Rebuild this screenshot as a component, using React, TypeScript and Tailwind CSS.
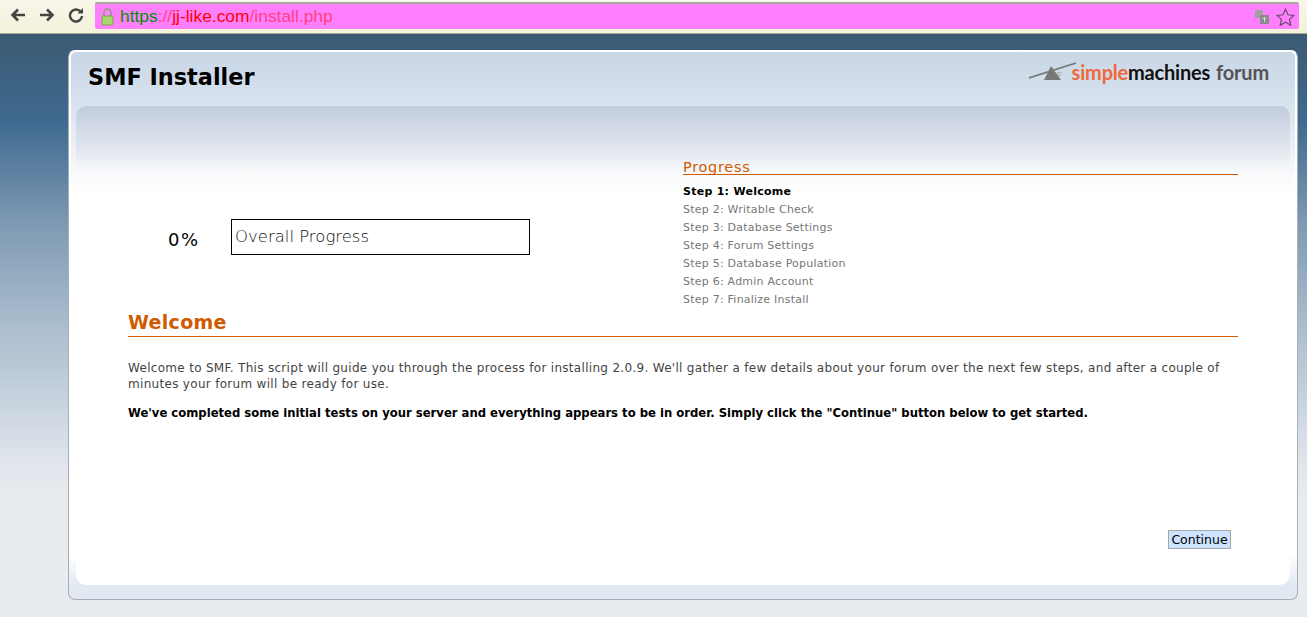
import React from "react";

const steps = ["Step 2: Writable Check","Step 3: Database Settings","Step 4: Forum Settings","Step 5: Database Population","Step 6: Admin Account","Step 7: Finalize Install"];

function Back({flip=false}:{flip?:boolean}){
  return <svg width="16" height="14" viewBox="0 0 16 14" className={flip?"-scale-x-100":""}><path d="M15 7H3M8 1.500 2.500 7 8 12.500" fill="none" stroke="#444" strokeWidth="2.600"/></svg>;
}

export default function App(){
  return (
    <div className="w-[1307px] h-[617px] overflow-hidden flex flex-col bg-[linear-gradient(180deg,#3c5a72_0px,#3c5a72_34px,#3f6a90_122px,#7c98b2_220px,#a4b8ca_310px,#e0e5ec_463px,#e8ecf0_500px)] font-['DejaVu_Sans',sans-serif]">
      <div className="h-[34px] shrink-0 flex items-start bg-[linear-gradient(180deg,#f8f7ea,#f3f1d8)] border-b border-[#a8a89c]">
        <div className="flex items-center gap-[13px] pl-[10px] w-[95px] h-[30px]">
          <Back/><Back flip/>
          <svg width="16" height="16" viewBox="0 0 16 16"><path d="M13 5.200A6 6 0 1 0 14 9" fill="none" stroke="#444" strokeWidth="2.400"/><path d="M9.500 6.500H15V1z" fill="#444"/></svg>
        </div>
        <div className="mt-[2px] w-[1204px] h-[27px] bg-[#ff80ff] border-t-2 border-[#a8a8a0] rounded-[2px] flex items-center pl-[6px] pr-[4px]">
          <svg width="13" height="18" viewBox="0 0 13 18" className="mr-[6px]"><path d="M3 8V4.500a3.500 3.500 0 0 1 7 0V8" fill="none" stroke="#8a9a7a" strokeWidth="1.600"/><rect x="1" y="8" width="11" height="9" rx="1" fill="#a6d86e" stroke="#7aa04e"/></svg>
          <span className="font-['Liberation_Sans',sans-serif] text-[17.400px] leading-none">
            <span className="text-[#009000]">https</span><span className="text-[#ff4080]">://</span><span className="text-[#ff0000]">jj-like.com</span><span className="text-[#ff4080]">/install.php</span>
          </span>
          <div className="ml-auto flex items-center gap-[7px]">
            <svg width="14" height="14" viewBox="0 0 14 14"><rect x="0" y="0" width="8" height="8" fill="#a0a0a0"/><rect x="5" y="5" width="9" height="9" fill="#8c8c8c"/><path d="M8 8.500h3M9.500 7v5" stroke="#ddd" strokeWidth="1"/></svg>
            <svg width="19" height="18" viewBox="0 0 19 18"><path d="M9.500 1.200 12 6.800l6 .6-4.500 4 1.300 5.900-5.300-3.100-5.300 3.100 1.300-5.900L1 7.400l6-.6z" fill="none" stroke="#6a4a6a" strokeWidth="1.200"/></svg>
          </div>
        </div>
      </div>

      <div className="mt-[16px] ml-[68px] w-[1230px] h-[550px] rounded-[7px] border border-[#a9aeb3] border-t-white border-t-2 bg-[linear-gradient(180deg,#ffffff_500px,#e2e9f2_535px)] px-[2px] flex flex-col">
        <div className="flex-1 rounded-t-[5px] rounded-b-[6px] bg-[linear-gradient(180deg,#c9d6e6_0px,#d9e3ef_54px,#ffffff_138px,#ffffff_503px,#e2e9f2_533px)] px-[5px] pb-[14px] flex flex-col">
          <div className="h-[54px] shrink-0 flex items-start justify-between pl-[12px] pr-[21px]">
            <h1 className="mt-[12px] text-[22.400px] leading-[26px] font-bold text-black">SMF Installer</h1>
            <div className="mt-[9px] flex items-start">
              <svg width="48" height="19" viewBox="0 0 48 19" className="mt-[1px] mr-[-5px]">
                <path d="M0 16 47 1" stroke="#777" strokeWidth="1.800"/>
                <path d="M22 4 32 18H15z" fill="#777"/>
                <circle cx="30" cy="12" r="1.800" fill="none" stroke="#888" strokeWidth="0.600"/>
              </svg>
              <span className="mt-[1px] block font-['Lato',sans-serif] font-bold text-[20px] leading-[20px] tracking-[-0.2px]">
                <span className="text-[#ee6a3c]">simple</span><span className="text-[#111]">machines</span><span className="text-[#555] ml-[6px]">forum</span>
              </span>
            </div>
          </div>

          <div className="flex-1 rounded-[10px] bg-[linear-gradient(180deg,#c1cddd_0px,#d8dfe9_30px,#e4e8ef_46px,#f6f8fa_64px,#ffffff_86px)] px-[52px] flex flex-col">
            <div className="h-[207px] shrink-0 flex">
              <div className="w-[555px] pt-[77px] pl-[40px] flex items-center h-[185px]">
                <span className="w-[63px] text-[18px] tracking-[1.500px] text-black mt-[5px]">0%</span>
                <div className="w-[299px] h-[36px] border border-black flex items-center pl-[3px] text-[16.500px] text-[#111] font-light">Overall Progress</div>
              </div>
              <div className="flex-1 pt-[52px]">
                <h2 className="text-[14.500px] tracking-[0.7px] leading-[19px] font-medium text-[#d05a00] border-b border-[#d05a00] h-[17px]">Progress</h2>
                <ul className="mt-[8px] text-[11px] leading-[18px] tracking-[0.23px] text-[#777]">
                  <li className="font-bold text-black tracking-[0.27px]">Step 1: Welcome</li>
                  {steps.map(s=><li key={s}>{s}</li>)}
                </ul>
              </div>
            </div>
            <h2 className="text-[19px] tracking-[0.3px] leading-[18px] h-[24px] font-bold text-[#d05a00] border-b border-[#d05a00]">Welcome</h2>
            <p className="mt-[23px] text-[12px] tracking-[0.305px] leading-[16px] text-[#444]">Welcome to SMF. This script will guide you through the process for installing 2.0.9. We'll gather a few details about your forum over the next few steps, and after a couple of minutes your forum will be ready for use.</p>
            <p className="mt-[13px] text-[11.630px] leading-[16px] font-bold text-black">We've completed some initial tests on your server and everything appears to be in order. Simply click the "Continue" button below to get started.</p>
            <div className="flex justify-end mt-[109px] pr-[7px]">
              <button className="w-[63px] h-[19px] pt-[2px] bg-[#cce4ff] border border-[#a8a8a8] text-[12.500px] leading-none text-black">Continue</button>
            </div>
          </div>
        </div>
      </div>
    </div>
  );
}
